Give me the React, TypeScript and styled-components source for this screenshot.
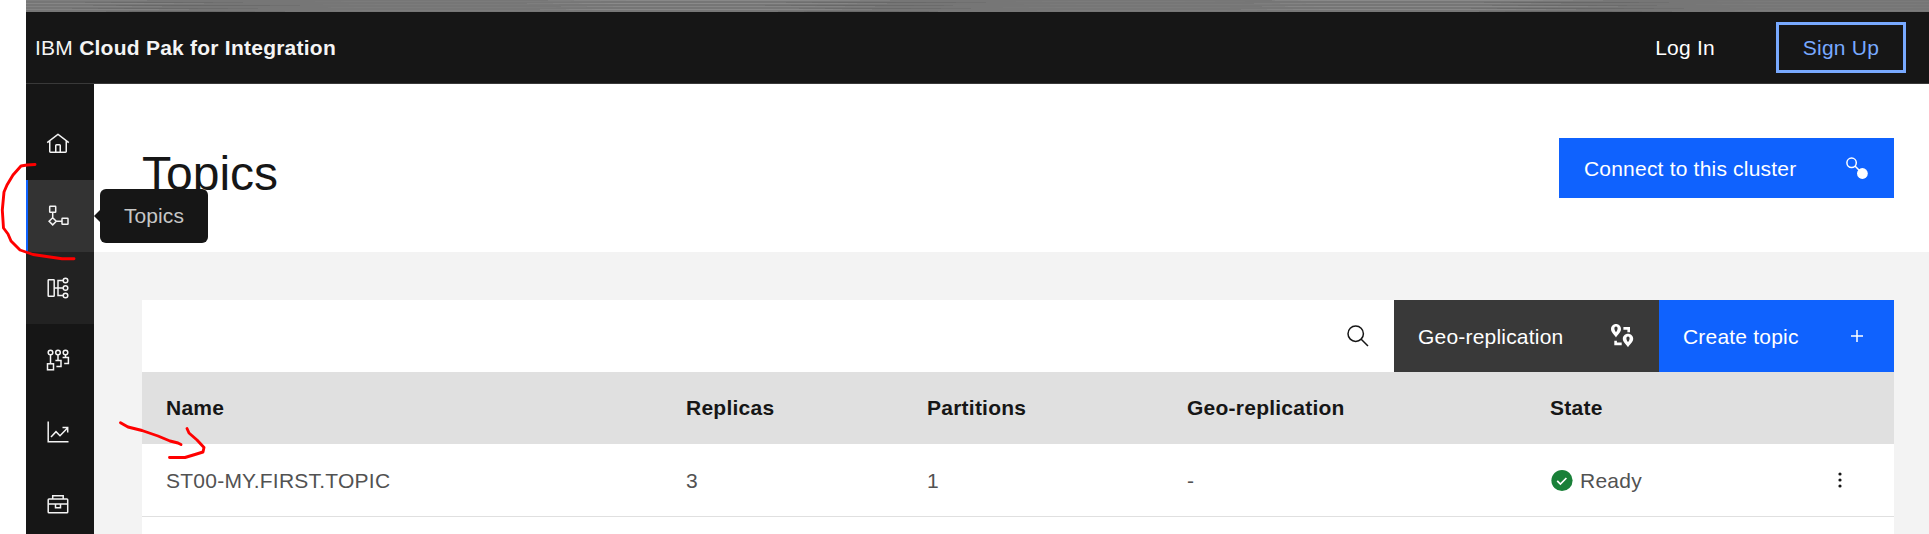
import React from "react";
import styled, { createGlobalStyle } from "styled-components";

const Global = createGlobalStyle`
  * { box-sizing: border-box; }
  html, body { margin: 0; padding: 0; background: #fff; }
  body {
    font-family: "Liberation Sans", Arial, sans-serif;
    font-size: 21px;
    color: #161616;
    overflow: hidden;
  }
  button { font: inherit; border: 0; margin: 0; }
`;

const Page = styled.div`
  position: relative;
  height: 534px;
  padding-left: 26px;
  display: flex;
  flex-direction: column;
  overflow: hidden;
`;

const Strip = styled.svg`
  display: block;
  width: 100%;
  height: 12px;
  flex: none;
`;

const Header = styled.header`
  height: 72px;
  flex: none;
  display: flex;
  align-items: center;
  padding: 0 23px 0 9px;
  background: #161616;
  border-bottom: 1px solid #393939;
  color: #f4f4f4;
`;

const Brand = styled.div`
  flex: 1;
  letter-spacing: 0.24px;
  white-space: pre;
`;

const LogIn = styled.a`
  margin-right: 61px;
  letter-spacing: 0.24px;
  color: #fff;
`;

const SignUp = styled.button`
  width: 130px;
  height: 51px;
  padding: 0;
  letter-spacing: 0.24px;
  color: #78a9ff;
  background: transparent;
  border: 3px solid #78a9ff;
`;

const Body = styled.div`
  flex: 1;
  min-height: 0;
  display: flex;
`;

const Sidebar = styled.nav`
  width: 68px;
  flex: none;
  padding-top: 24px;
  background: #161616;
`;

const NavItem = styled.a<{ $tone?: "active" | "hover" }>`
  position: relative;
  height: 72px;
  display: flex;
  align-items: center;
  padding-left: 18px;
  border-left: 2px solid ${(p) => (p.$tone === "active" ? "#0f62fe" : "transparent")};
  background: ${(p) => (p.$tone === "active" ? "#333" : p.$tone === "hover" ? "#222" : "#161616")};
`;

const Tooltip = styled.span`
  position: absolute;
  z-index: 2;
  left: 72px;
  top: 9px;
  width: 108px;
  height: 54px;
  display: flex;
  align-items: center;
  justify-content: center;
  border-radius: 6px;
  background: #161616;
  color: #c6c6c6;
  letter-spacing: 0.1px;
  &::before {
    content: "";
    position: absolute;
    left: -6px;
    top: 21px;
    border: 6px solid transparent;
    border-left-width: 0;
    border-right-color: #161616;
  }
`;

const Main = styled.main`
  flex: 1;
  display: flex;
  flex-direction: column;
  background: #f3f3f3;
`;

const Hero = styled.section`
  height: 168px;
  flex: none;
  display: flex;
  align-items: flex-start;
  justify-content: space-between;
  padding: 54px 35px 0 48px;
  background: #fff;
`;

const Title = styled.h1`
  margin: 8px 0 0;
  font-size: 48px;
  line-height: 56px;
  font-weight: 400;
`;

const Button = styled.button<{ $w: number; $h: number; $bg: string; $pl?: number }>`
  width: ${(p) => p.$w}px;
  height: ${(p) => p.$h}px;
  display: flex;
  align-items: center;
  justify-content: space-between;
  padding: 0 25px 0 ${(p) => p.$pl ?? 24}px;
  color: #fff;
  background: ${(p) => p.$bg};
  letter-spacing: 0.2px;
`;

const Label = styled.span`
  padding-top: 2px;
`;

const Panel = styled.section`
  flex: 1;
  margin: 48px 35px 0 48px;
  background: #fff;
`;

const Toolbar = styled.div`
  height: 72px;
  display: flex;
  justify-content: flex-end;
`;

const SearchBox = styled.div`
  width: 72px;
  display: flex;
  align-items: center;
  justify-content: center;
`;

const Row = styled.div<{ $head?: boolean }>`
  display: grid;
  grid-template-columns: 520px 241px 260px 363px 1fr 108px;
  align-items: center;
  height: ${(p) => (p.$head ? 72 : 73)}px;
  background: ${(p) => (p.$head ? "#e0e0e0" : "#fff")};
  border-bottom: ${(p) => (p.$head ? "0" : "1px solid #e0e0e0")};
  color: ${(p) => (p.$head ? "#161616" : "#525252")};
  font-weight: ${(p) => (p.$head ? 700 : 400)};
  letter-spacing: 0.24px;
`;

const Cell = styled.div`
  display: flex;
  align-items: center;
  gap: 6px;
  padding-left: 24px;
`;

const MenuCell = styled.div`
  display: flex;
  justify-content: center;
`;

const Marks = styled.svg`
  position: absolute;
  left: 0;
  top: 0;
  z-index: 3;
  pointer-events: none;
`;

const Line = ({ children }: { children: React.ReactNode }) => (
  <svg width="24" height="24" viewBox="0 0 24 24" fill="none" stroke="#f4f4f4" strokeWidth="1.5">
    {children}
  </svg>
);

const HomeIcon = () => (
  <svg width="24" height="24" viewBox="0 0 32 32" fill="#f4f4f4">
    <path d="M16.6123,2.2138a1.01,1.01,0,0,0-1.2427,0L1,13.4194l1.2427,1.5717L4,13.6208V26a2.0041,2.0041,0,0,0,2,2H26a2.0037,2.0037,0,0,0,2-2V13.63L29.7573,15,31,13.4282ZM18,26H14V18h4Zm2,0V18a2.0023,2.0023,0,0,0-2-2H14a2.002,2.002,0,0,0-2,2v8H6V12.0615l10-7.79,10,7.8005V26Z" />
  </svg>
);

const TopicsIcon = () => (
  <Line>
    <rect x="3.7" y="2.2" width="6" height="6" rx="0.5" />
    <rect x="16" y="14.3" width="6" height="6" rx="0.5" />
    <path d="M6.7 8.2v5.5M6.7 13.7l3.6 3.6-3.6 3.6-3.6-3.6zM10.3 17.3H16" />
  </Line>
);

const SchemaIcon = () => (
  <Line>
    <rect x="2.2" y="3.7" width="6" height="16.6" rx="0.6" />
    <circle cx="19.5" cy="4.5" r="2.3" />
    <circle cx="19.5" cy="12" r="2.3" />
    <circle cx="19.5" cy="19.5" r="2.3" />
    <path d="M17.2 4.5H12v15h5.2M8.2 12h9" />
  </Line>
);

const GroupsIcon = () => (
  <Line>
    <circle cx="4.5" cy="4.5" r="2.3" />
    <circle cx="12" cy="4.5" r="2.3" />
    <circle cx="19.5" cy="4.5" r="2.3" />
    <rect x="1.5" y="15.8" width="6" height="6" />
    <path d="M4.5 6.8v9M12 6.8v5.6M9.4 12.4H15v6h-4.6M19.5 6.8v2.8M16.6 9.6h5.8v6h-4.2" />
  </Line>
);

const ChartIcon = () => (
  <Line>
    <path d="M2.2 1.5v20.2H22.5M5 17l5-5.3 4 4 7.5-7.7M16.5 7.5h5.2v5" />
  </Line>
);

const ToolboxIcon = () => (
  <Line>
    <rect x="2.2" y="7" width="19.5" height="13.7" rx="0.8" />
    <path d="M6.7 7V3.7h10.5V7M2.2 12h19.5M9.5 12v3.800h5V12" />
  </Line>
);

const streaks = Array.from({ length: 150 }, (_, i) => ({
  x: ((i * 733 + (i % 7) * 211) % 2100) - 150,
  y: (i * 5) % 12,
  w: 60 + ((i * 73) % 220),
  c: i % 3 === 0 ? "#8c8c8c" : i % 3 === 1 ? "#666" : "#7c7c7c",
}));

const columns = ["Name", "Replicas", "Partitions", "Geo-replication", "State"];

export default function App() {
  return (
    <>
      <Global />
      <Page>
        <Strip viewBox="0 0 1903 12" preserveAspectRatio="none">
          <rect width="1903" height="12" fill="#767676" />
          {streaks.map((s, i) => (
            <rect key={i} x={s.x} y={s.y} width={s.w} height="1" fill={s.c} opacity="0.4" />
          ))}
        </Strip>
        <Header>
          <Brand>
            IBM <b>Cloud Pak for Integration</b>
          </Brand>
          <LogIn>Log In</LogIn>
          <SignUp>Sign Up</SignUp>
        </Header>
        <Body>
          <Sidebar>
            <NavItem><HomeIcon /></NavItem>
            <NavItem $tone="active">
              <TopicsIcon />
              <Tooltip>Topics</Tooltip>
            </NavItem>
            <NavItem $tone="hover"><SchemaIcon /></NavItem>
            <NavItem><GroupsIcon /></NavItem>
            <NavItem><ChartIcon /></NavItem>
            <NavItem><ToolboxIcon /></NavItem>
          </Sidebar>
          <Main>
            <Hero>
              <Title>Topics</Title>
              <Button $w={335} $h={60} $bg="#0f62fe" $pl={25}>
                <Label>Connect to this cluster</Label>
                <svg width="24" height="24" viewBox="0 0 24 24">
                  <circle cx="6.6" cy="6.800" r="4.7" fill="none" stroke="#fff" strokeWidth="1.5" />
                  <path d="M10 10l5 5" stroke="#fff" strokeWidth="1.5" />
                  <circle cx="17.4" cy="17.5" r="5.4" fill="#fff" />
                </svg>
              </Button>
            </Hero>
            <Panel>
              <Toolbar>
                <SearchBox>
                  <svg width="24" height="24" viewBox="0 0 24 24" fill="none" stroke="#161616" strokeWidth="1.5">
                    <circle cx="9.700" cy="9.700" r="7.700" />
                    <path d="M15.200 15.200l6.800 6.800" />
                  </svg>
                </SearchBox>
                <Button $w={265} $h={72} $bg="#393939">
                  <Label>Geo-replication</Label>
                  <svg width="24" height="24" viewBox="0 0 24 24" fill="#fff">
                    <path fillRule="evenodd" d="M6 0C3.200 0 1 2.200 1 5c0 3.400 3 5 5 8.400C8 10 11 8.400 11 5c0-2.800-2.200-5-5-5zm0 2.600c1.100 0 1.600.9 1.600 2S7 7 6 8.300C5 7 4.400 5.700 4.400 4.600s.5-2 1.600-2z" />
                    <path fillRule="evenodd" d="M18 9.800c-2.900 0-5.200 2.200-5.200 5 0 3.400 3.200 5 5.200 8.500 2-3.500 5.200-5.100 5.200-8.500 0-2.800-2.300-5-5.200-5zm0 2.600c1.100 0 1.600.9 1.600 2s-.6 2.400-1.600 3.700c-1-1.300-1.600-2.600-1.600-3.700s.5-2 1.600-2z" />
                    <path d="M13.400 3H20v5.200h-2.600V5.700h-4zM4.300 16.800h2.600v1.600h4.800v2.800H4.300z" />
                  </svg>
                </Button>
                <Button $w={235} $h={72} $bg="#0f62fe">
                  <Label>Create topic</Label>
                  <svg width="24" height="24" viewBox="0 0 24 24" stroke="#fff" strokeWidth="1.5">
                    <path d="M12 6v12M6 12h12" />
                  </svg>
                </Button>
              </Toolbar>
              <Row $head>
                {columns.map((c) => (
                  <Cell key={c}>{c}</Cell>
                ))}
              </Row>
              <Row>
                <Cell><Label>ST00-MY.FIRST.TOPIC</Label></Cell>
                <Cell><Label>3</Label></Cell>
                <Cell><Label>1</Label></Cell>
                <Cell><Label>-</Label></Cell>
                <Cell>
                  <svg width="24" height="24" viewBox="0 0 24 24">
                    <circle cx="12" cy="12.500" r="10.600" fill="#198038" />
                    <path d="M7.200 12.800l3.200 3.200 6-6" fill="none" stroke="#fff" strokeWidth="1.700" />
                  </svg>
                  <Label>Ready</Label>
                </Cell>
                <MenuCell>
                  <svg width="24" height="24" viewBox="0 0 24 24" fill="#161616">
                    <circle cx="12" cy="6" r="1.600" />
                    <circle cx="12" cy="12" r="1.600" />
                    <circle cx="12" cy="18" r="1.600" />
                  </svg>
                </MenuCell>
              </Row>
            </Panel>
          </Main>
        </Body>
        <Marks width="1929" height="534" fill="none" stroke="#f00" strokeWidth="2.900" strokeLinecap="round" strokeLinejoin="round">
          <path d="M35 164.500L27 165 21 166 13 175 7 185 4 192 2.300 210 3.500 228 8 234 11 241 16 246 20 250 33 254.500 50 257 62 258.700H74" />
          <path d="M120.500 422.700L128 427 142 430.500 158 436 170 441 178 443 181 444.500M187 428.500L189 433 197 440 204 447.500 203 452 195 454.500 185 457.500H169.500" />
        </Marks>
      </Page>
    </>
  );
}
